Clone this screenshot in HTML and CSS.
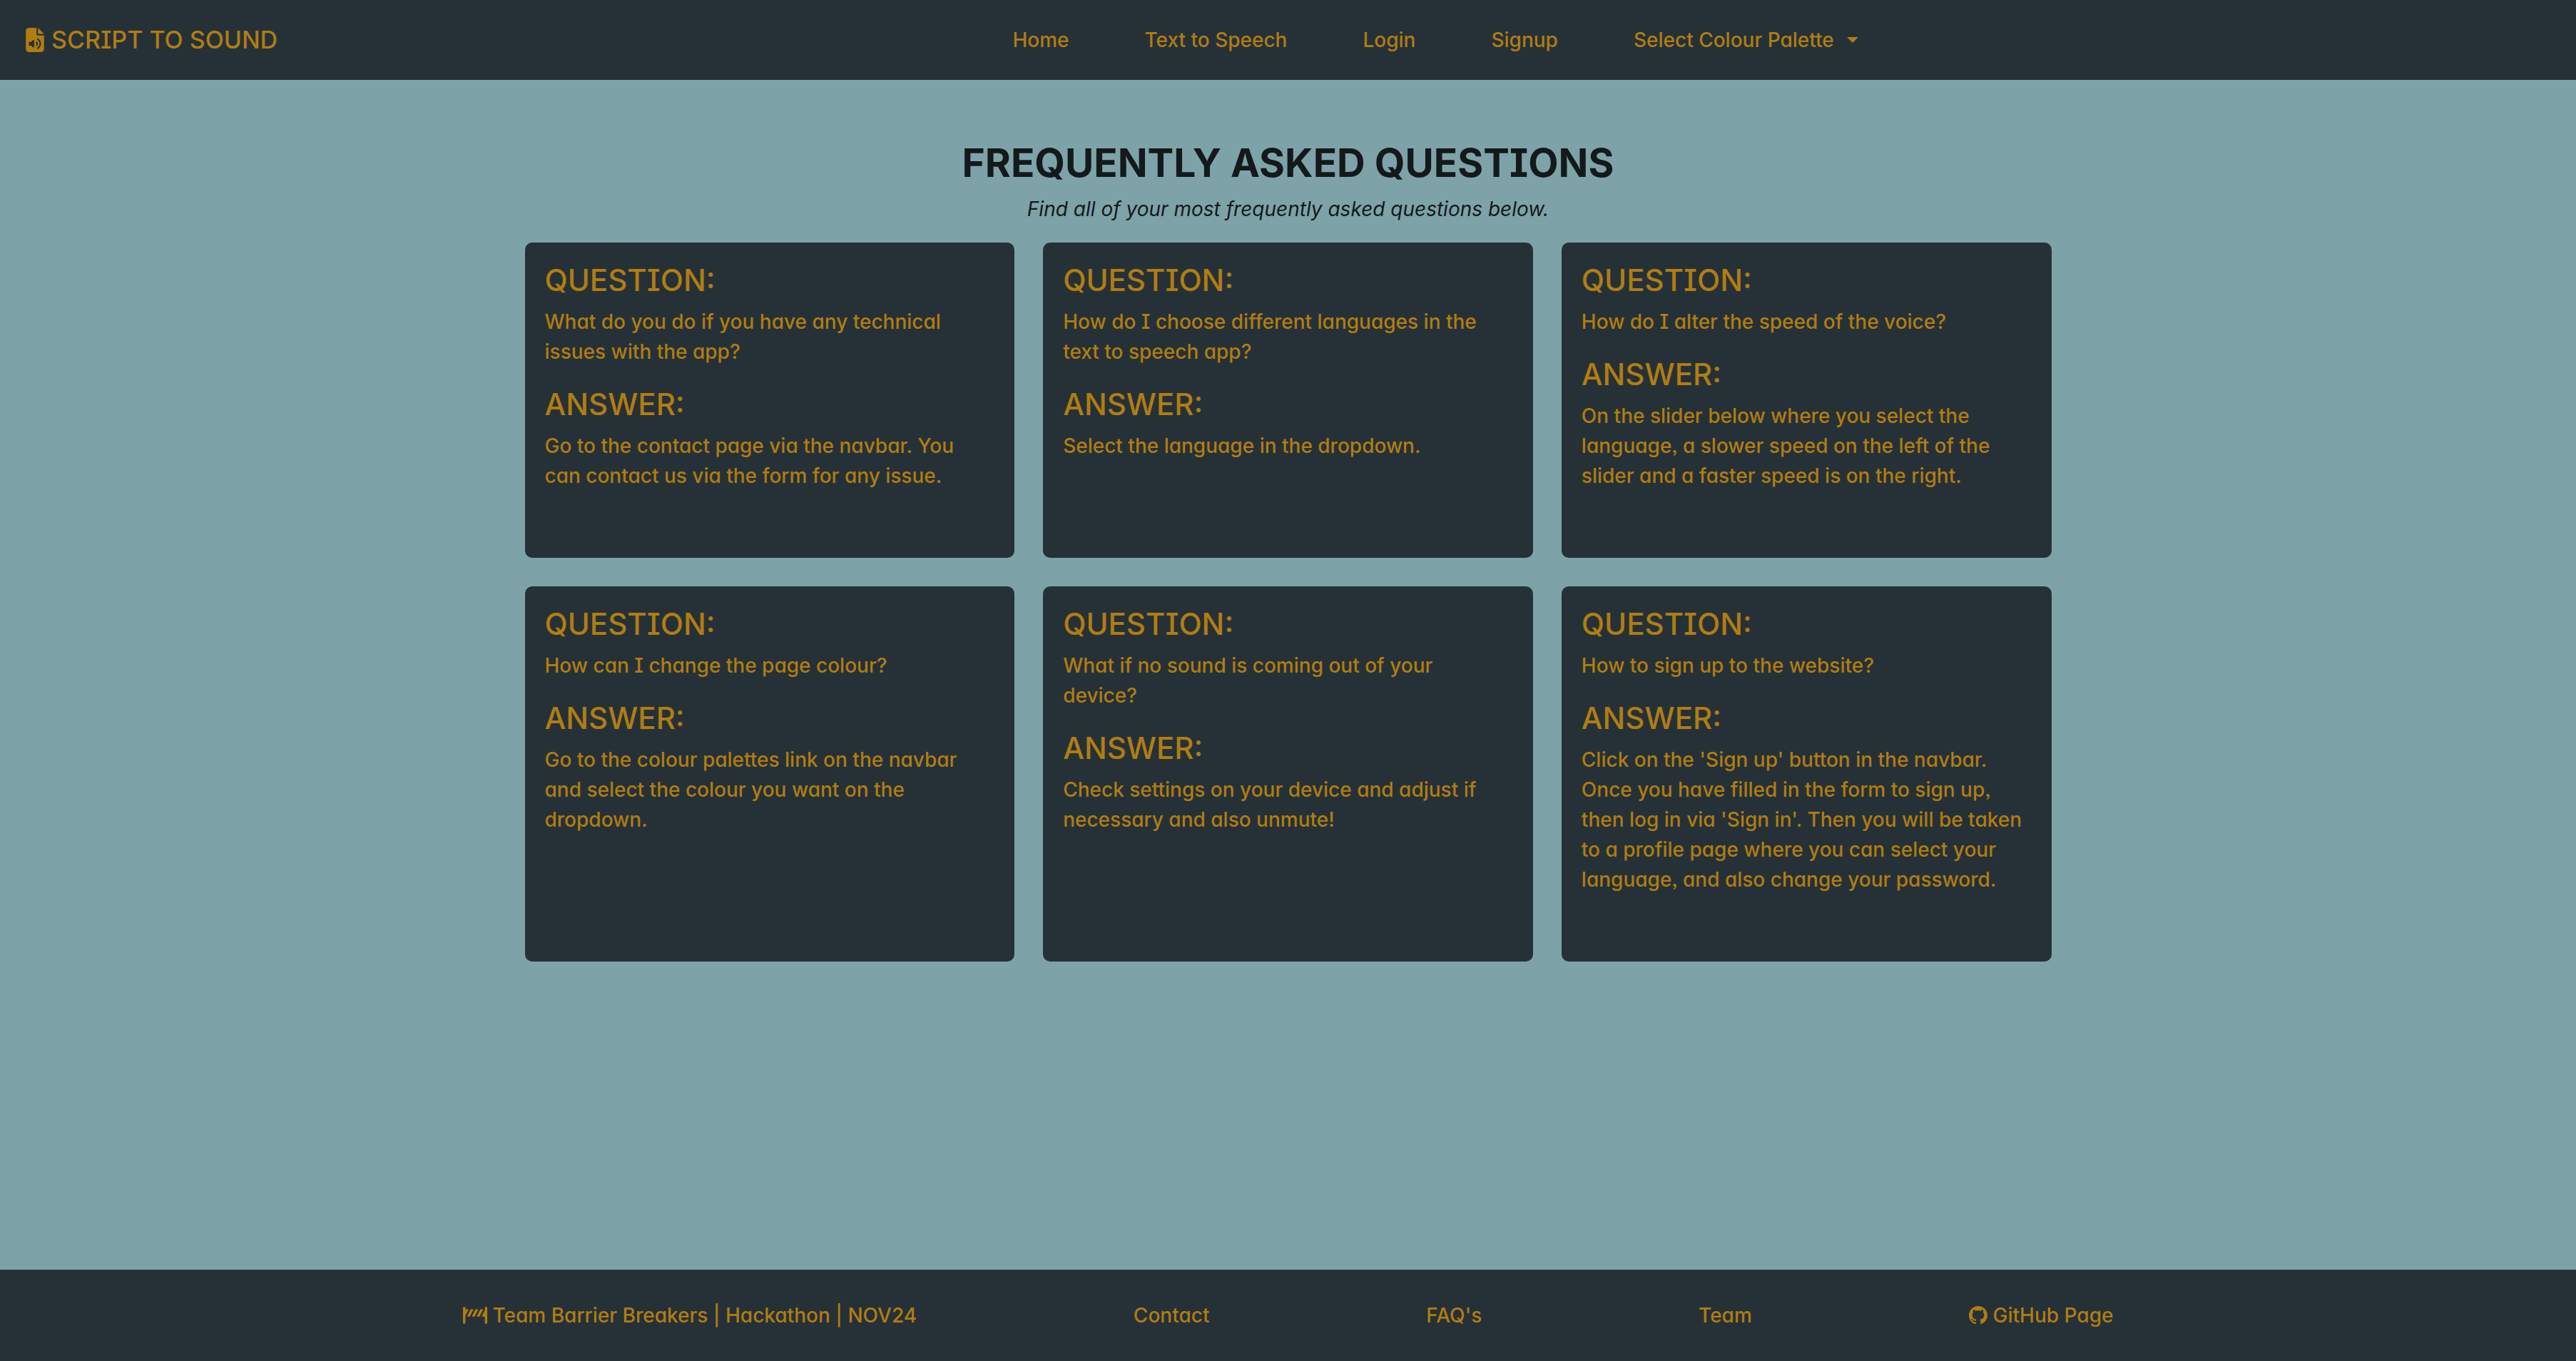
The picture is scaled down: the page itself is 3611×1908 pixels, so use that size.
FILE: index.html
```html
<!DOCTYPE html>
<html lang="en">
<head>
<meta charset="utf-8">
<meta name="viewport" content="width=device-width, initial-scale=1">
<title>Script to Sound</title>
<link rel="stylesheet" href="styles.css">
</head>
<body>
<header class="navbar">
  <a class="brand" href="#">
    <svg class="brand-icon" viewBox="0 0 384 512" aria-hidden="true"><path fill="currentColor" fill-rule="evenodd" d="M64 0C28.700 0 0 28.700 0 64V448c0 35.300 28.700 64 64 64H320c35.300 0 64-28.700 64-64V160H256c-17.700 0-32-14.300-32-32V0H64zM256 0V128H384L256 0zm2 226.300c37.100 22.400 62 63.100 62 109.700s-24.900 87.300-62 109.700c-7.600 4.600-17.400 2.100-22-5.400s-2.100-17.400 5.400-22C269.400 401.500 288 370.900 288 336s-18.600-65.500-46.500-82.300c-7.600-4.600-10-14.400-5.400-22s14.400-10 22-5.400zm-91.900 30.900c6 2.500 9.900 8.300 9.900 14.800V400c0 6.500-3.900 12.300-9.900 14.800s-12.900 1.100-17.400-3.500L113.400 376H80c-8.800 0-16-7.200-16-16V312c0-8.800 7.200-16 16-16h33.400l35.300-35.300c4.600-4.600 11.500-5.900 17.400-3.500zm51 34.900c6.600-5.900 16.700-5.300 22.600 1.300C249.800 304.600 256 319.600 256 336s-6.200 31.400-16.300 42.700c-5.900 6.600-16 7.100-22.600 1.300s-7.100-16-1.300-22.600c5.100-5.700 8.100-13.100 8.100-21.300s-3.100-15.700-8.100-21.300c-5.900-6.600-5.300-16.700 1.300-22.600z"/></svg>
    SCRIPT TO SOUND
  </a>
  <nav class="nav-links" aria-label="Main">
    <a href="#">Home</a>
    <a href="#">Text to Speech</a>
    <a href="#">Login</a>
    <a href="#">Signup</a>
    <button class="palette-toggle" type="button" aria-haspopup="true">Select Colour Palette</button>
  </nav>
</header>

<main class="content">
  <h1>FREQUENTLY ASKED QUESTIONS</h1>
  <p class="intro">Find all of your most frequently asked questions below.</p>
  <div class="cards">
    <article class="card">
      <h2>QUESTION:</h2>
      <p>What do you do if you have any technical issues with the app?</p>
      <h2>ANSWER:</h2>
      <p>Go to the contact page via the navbar. You can contact us via the form for any issue.</p>
    </article>
    <article class="card">
      <h2>QUESTION:</h2>
      <p>How do I choose different languages in the text to speech app?</p>
      <h2>ANSWER:</h2>
      <p>Select the language in the dropdown.</p>
    </article>
    <article class="card">
      <h2>QUESTION:</h2>
      <p>How do I alter the speed of the voice?</p>
      <h2>ANSWER:</h2>
      <p>On the slider below where you select the language, a slower speed on the left of the slider and a faster speed is on the right.</p>
    </article>
    <article class="card">
      <h2>QUESTION:</h2>
      <p>How can I change the page colour?</p>
      <h2>ANSWER:</h2>
      <p>Go to the colour palettes link on the navbar and select the colour you want on the dropdown.</p>
    </article>
    <article class="card">
      <h2>QUESTION:</h2>
      <p>What if no sound is coming out of your device?</p>
      <h2>ANSWER:</h2>
      <p>Check settings on your device and adjust if necessary and also unmute!</p>
    </article>
    <article class="card">
      <h2>QUESTION:</h2>
      <p>How to sign up to the website?</p>
      <h2>ANSWER:</h2>
      <p>Click on the 'Sign up' button in the navbar. Once you have filled in the form to sign up, then log in via 'Sign in'. Then you will be taken to a profile page where you can select your language, and also change your password.</p>
    </article>
  </div>
</main>

<footer class="footer">
  <div class="footer-row">
    <span class="footer-item">
      <svg class="barrier-icon" viewBox="0 0 640 512" aria-hidden="true"><path fill="currentColor" d="M32 32C14.300 32 0 46.300 0 64V448c0 17.700 14.300 32 32 32s32-14.300 32-32V266.300L149.200 96H64V64c0-17.700-14.300-32-32-32zM405.200 96H330.800l-5.400 10.700L234.800 288h74.300l5.400-10.700L405.200 96zM362.800 288h74.300l5.400-10.700L533.200 96H458.800l-5.400 10.700L362.800 288zM202.800 96l-5.400 10.700L106.800 288h74.300l5.400-10.700L277.200 96H202.800zm288 192H576V448c0 17.700 14.300 32 32 32s32-14.300 32-32V64c0-17.700-14.300-32-32-32s-32 14.300-32 32v53.700L490.800 288z"/></svg>
      Team Barrier Breakers | Hackathon | NOV24
    </span>
    <a class="footer-item" href="#">Contact</a>
    <a class="footer-item" href="#">FAQ's</a>
    <a class="footer-item" href="#">Team</a>
    <a class="footer-item" href="#">
      <svg class="github-icon" viewBox="0 0 16 16" aria-hidden="true"><path fill="currentColor" d="M8 0C3.580 0 0 3.580 0 8c0 3.540 2.290 6.530 5.470 7.590.4.070.55-.17.55-.38 0-.19-.01-.82-.01-1.490-2.010.37-2.530-.49-2.690-.94-.09-.23-.48-.94-.82-1.130-.28-.15-.68-.52-.01-.53.63-.01 1.080.58 1.230.82.72 1.210 1.870.87 2.330.66.07-.52.28-.87.51-1.070-1.780-.2-3.640-.89-3.640-3.950 0-.87.31-1.590.82-2.150-.08-.2-.36-1.020.08-2.120 0 0 .67-.21 2.200.82.64-.18 1.320-.27 2-.27s1.360.09 2 .27c1.530-1.040 2.200-.82 2.200-.82.44 1.100.16 1.920.08 2.120.51.56.82 1.270.82 2.150 0 3.070-1.870 3.750-3.650 3.950.29.25.54.73.54 1.480 0 1.070-.01 1.930-.01 2.200 0 .21.15.46.55.38A8.010 8.010 0 0 0 16 8c0-4.420-3.580-8-8-8z"/></svg>
      GitHub Page
    </a>
  </div>
</footer>
</body>
</html>
```
FILE: styles.css
```css
:root {
  --dark: #263137;
  --teal: #7da3a8;
  --gold: #b07d12;
  --ink: #14191c;
}

* {
  box-sizing: border-box;
}

body {
  margin: 0;
  min-height: 100vh;
  display: flex;
  flex-direction: column;
  background: var(--teal);
  color: var(--ink);
  font-family: Inter, "Noto Sans", sans-serif;
  font-size: 28px;
  font-weight: 500;
  line-height: 42px;
  font-feature-settings: "cv08", "cv11", "ss03";
}

a {
  color: inherit;
  text-decoration: none;
}

.navbar {
  display: flex;
  align-items: center;
  min-height: 112px;
  padding: 0 36px;
  background: var(--dark);
  color: var(--gold);
}

.brand {
  display: flex;
  align-items: center;
  gap: 10px;
  font-size: 34px;
}

.brand-icon {
  width: 26px;
  height: 34px;
}

.nav-links {
  flex: 1;
  display: flex;
  justify-content: center;
  align-items: center;
  flex-wrap: wrap;
  gap: 0 106px;
  padding-left: 60px;
}

.palette-toggle {
  display: flex;
  align-items: center;
  gap: 18px;
  padding: 0;
  border: 0;
  background: none;
  color: inherit;
  font: inherit;
  font-feature-settings: inherit;
}

.palette-toggle::after {
  content: "";
  border: 8px solid transparent;
  border-top-color: currentColor;
  border-bottom: 0;
}

.content {
  flex: 1;
  width: 100%;
  max-width: 2220px;
  margin: 0 auto;
  padding: 84px 40px 40px;
}

h1 {
  margin: 0 0 12px;
  font-size: 55px;
  font-weight: 700;
  line-height: 64px;
  text-align: center;
}

.intro {
  margin: 0 0 26px;
  font-style: italic;
  font-weight: 400;
  text-align: center;
}

.cards {
  display: grid;
  grid-template-columns: repeat(3, 1fr);
  gap: 40px;
}

.card {
  padding: 28px 32px 66px 28px;
  border-radius: 10px;
  background: var(--dark);
  color: var(--gold);
}

.card h2 {
  margin: 0 0 12px;
  font-size: 42px;
  font-weight: 500;
  line-height: 50px;
}

.card p {
  margin: 0 0 28px;
}

.footer {
  display: flex;
  align-items: center;
  justify-content: center;
  min-height: 128px;
  padding: 0 40px;
  background: var(--dark);
  color: var(--gold);
}

.footer-row {
  flex: 1;
  max-width: 2314px;
  display: flex;
  flex-wrap: wrap;
  justify-content: space-between;
}

.footer-item {
  display: flex;
  align-items: center;
  gap: 8px;
}

.barrier-icon {
  width: 34px;
  height: 28px;
}

.github-icon {
  width: 26px;
  height: 26px;
}

@media (max-width: 1700px) {
  .navbar {
    flex-wrap: wrap;
  }

  .nav-links {
    gap: 0 48px;
  }

  .cards {
    grid-template-columns: repeat(2, 1fr);
  }
}

@media (max-width: 900px) {
  .cards {
    grid-template-columns: 1fr;
  }
}
```
